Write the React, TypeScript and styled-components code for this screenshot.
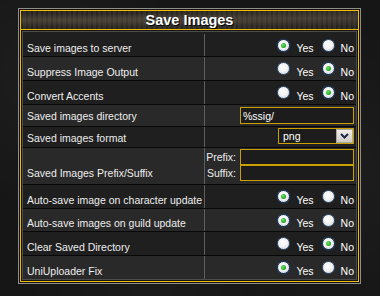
import styled, { createGlobalStyle } from 'styled-components';

const GlobalStyle = createGlobalStyle`
  html, body {
    margin: 0;
    padding: 0;
  }
  body {
    background: #161616;
    font-family: "Liberation Sans", Arial, sans-serif;
  }
`;

const Page = styled.div`
  width: 380px;
  height: 296px;
  box-sizing: border-box;
  padding: 8px 0 0 18px;
  background:
    radial-gradient(circle at 12% 25%, rgba(255, 255, 255, 0.035), transparent 35%),
    radial-gradient(circle at 90% 60%, rgba(255, 255, 255, 0.03), transparent 40%),
    radial-gradient(circle at 40% 95%, rgba(255, 255, 255, 0.025), transparent 35%),
    #161616;
`;

const Frame = styled.div`
  width: 343px;
  box-sizing: border-box;
  border: 1px solid #8e8e8e;
  padding: 1px;
  background: #121212;
`;

const GoldBox = styled.div`
  border: 1px solid #f2bd00;
  background: #151515;
`;

const Header = styled.div`
  height: 18px;
  line-height: 18px;
  border-bottom: 1px solid #f2bd00;
  text-align: center;
  color: #ffffff;
  font-weight: bold;
  font-size: 14.5px;
  text-shadow: 1px 1px 0 #000;
  background:
    radial-gradient(ellipse at 12% 50%, rgba(130, 115, 95, 0.35), transparent 55%),
    radial-gradient(ellipse at 88% 40%, rgba(130, 115, 95, 0.3), transparent 55%),
    radial-gradient(ellipse at 50% 60%, rgba(90, 80, 65, 0.25), transparent 60%),
    repeating-linear-gradient(90deg, rgba(0, 0, 0, 0.12) 0 2px, rgba(255, 255, 255, 0.03) 2px 5px),
    #2b2722;
`;

const TableWrap = styled.div`
  padding: 1px;
`;

const Table = styled.div`
  border: 1px solid #4c4c4c;
`;

const Row = styled.div<{ $h: number; $alt?: boolean; $last?: boolean; $pt?: number }>`
  display: flex;
  height: ${(p) => p.$h}px;
  box-sizing: border-box;
  padding-top: ${(p) => p.$pt ?? 0}px;
  background: ${(p) => (p.$alt ? '#292929' : '#1f1f1f')};
  border-bottom: ${(p) => (p.$last ? 'none' : '1px solid #080808')};
`;

const Label = styled.div<{ $pt?: number; $bottom?: boolean }>`
  width: 181px;
  box-sizing: border-box;
  display: flex;
  align-items: ${(p) => (p.$bottom ? 'flex-end' : 'center')};
  padding: ${(p) => p.$pt ?? 6}px 0 ${(p) => (p.$bottom ? 5 : 0)}px 4px;
  color: #eeeeee;
  font-size: 10.5px;
  line-height: 12px;
  white-space: nowrap;
`;

const Value = styled.div<{ $column?: boolean; $pb?: number; $pt?: number }>`
  flex: 1;
  box-sizing: border-box;
  border-left: 1px solid #5e5e5e;
  display: flex;
  flex-direction: ${(p) => (p.$column ? 'column' : 'row')};
  align-items: ${(p) => (p.$column ? 'flex-end' : 'center')};
  justify-content: ${(p) => (p.$column ? 'flex-start' : 'flex-end')};
  padding: ${(p) => p.$pt ?? 0}px 2px ${(p) => p.$pb ?? 0}px 0;
  color: #eeeeee;
  font-size: 10.5px;
  line-height: 12px;
`;

const RadioGroup = styled.div`
  display: flex;
  align-items: center;
  gap: 8px;
`;

const RadioOption = styled.label`
  display: inline-flex;
  align-items: center;
`;

const Circle = styled.span<{ $on?: boolean }>`
  width: 13px;
  height: 13px;
  box-sizing: border-box;
  border-radius: 50%;
  border: 1px solid ${(p) => (p.$on ? '#1e3b5e' : '#38597c')};
  background: radial-gradient(circle at 45% 40%, #ffffff 0%, #f3f3f3 45%, #c4cad3 100%);
  display: flex;
  align-items: center;
  justify-content: center;
  box-shadow: 0 0 0 ${(p) => (p.$on ? '0.5px' : '0')} #1e3b5e;

  &::after {
    content: '';
    display: ${(p) => (p.$on ? 'block' : 'none')};
    width: 5px;
    height: 5px;
    border-radius: 50%;
    background: radial-gradient(circle at 40% 40%, #7be27b 0%, #24b024 55%, #138a13 100%);
  }
`;

const RadioText = styled.span`
  margin: 6px 0 0 6px;
  color: #ffffff;
`;

const TextInput = styled.input`
  width: 114px;
  height: 17px;
  box-sizing: border-box;
  border: 1px solid #c9a000;
  background: #1c1c1c;
  color: #ffffff;
  font-family: "Liberation Sans", Arial, sans-serif;
  font-size: 10.5px;
  padding: 0 2px;
  margin: 0;
  outline: none;
`;

const SmallInput = styled(TextInput)`
  height: 16px;
`;

const SelectBox = styled.div`
  width: 76px;
  height: 16px;
  box-sizing: border-box;
  border: 1px solid #c9a000;
  background: #1c1c1c;
  display: flex;
  align-items: center;
`;

const SelectText = styled.span`
  flex: 1;
  padding-left: 4px;
  color: #ffffff;
`;

const SelectArrow = styled.span`
  width: 17px;
  height: 14px;
  box-sizing: border-box;
  border: 1px solid #a9a7a2;
  background: linear-gradient(#f0eeea, #cfccc6);
  display: flex;
  align-items: center;
  justify-content: center;
`;

const PairLine = styled.div`
  display: flex;
  align-items: center;
  gap: 4px;
`;

type Choice = 'yes' | 'no';

const YesNo = ({ value }: { value: Choice }) => (
  <RadioGroup>
    <RadioOption>
      <Circle $on={value === 'yes'} />
      <RadioText>Yes</RadioText>
    </RadioOption>
    <RadioOption>
      <Circle $on={value === 'no'} />
      <RadioText>No</RadioText>
    </RadioOption>
  </RadioGroup>
);

export default function App() {
  return (
    <>
      <GlobalStyle />
      <Page>
        <Frame>
          <GoldBox>
            <Header>Save Images</Header>
            <TableWrap>
              <Table>
                <Row $h={25} $pt={2}>
                  <Label>Save images to server</Label>
                  <Value>
                    <YesNo value="yes" />
                  </Value>
                </Row>
                <Row $h={24} $alt>
                  <Label>Suppress Image Output</Label>
                  <Value>
                    <YesNo value="no" />
                  </Value>
                </Row>
                <Row $h={24}>
                  <Label>Convert Accents</Label>
                  <Value>
                    <YesNo value="no" />
                  </Value>
                </Row>
                <Row $h={22} $alt>
                  <Label $pt={1}>Saved images directory</Label>
                  <Value>
                    <TextInput readOnly value="%ssig/" />
                  </Value>
                </Row>
                <Row $h={21}>
                  <Label $pt={1}>Saved images format</Label>
                  <Value $pb={2}>
                    <SelectBox>
                      <SelectText>png</SelectText>
                      <SelectArrow>
                        <svg width="9" height="6" viewBox="0 0 9 6">
                          <polyline points="1,1 4.5,4.5 8,1" fill="none" stroke="#1c2a48" strokeWidth="2" />
                        </svg>
                      </SelectArrow>
                    </SelectBox>
                  </Value>
                </Row>
                <Row $h={37} $alt>
                  <Label $bottom>Saved Images Prefix/Suffix</Label>
                  <Value $column $pt={1}>
                    <PairLine>
                      Prefix:
                      <SmallInput readOnly value="" />
                    </PairLine>
                    <PairLine>
                      Suffix:
                      <SmallInput readOnly value="" />
                    </PairLine>
                  </Value>
                </Row>
                <Row $h={24}>
                  <Label>Auto-save image on character update</Label>
                  <Value>
                    <YesNo value="yes" />
                  </Value>
                </Row>
                <Row $h={23} $alt>
                  <Label>Auto-save images on guild update</Label>
                  <Value>
                    <YesNo value="yes" />
                  </Value>
                </Row>
                <Row $h={24}>
                  <Label>Clear Saved Directory</Label>
                  <Value>
                    <YesNo value="no" />
                  </Value>
                </Row>
                <Row $h={23} $alt $last>
                  <Label>UniUploader Fix</Label>
                  <Value>
                    <YesNo value="yes" />
                  </Value>
                </Row>
              </Table>
            </TableWrap>
          </GoldBox>
        </Frame>
      </Page>
    </>
  );
}
